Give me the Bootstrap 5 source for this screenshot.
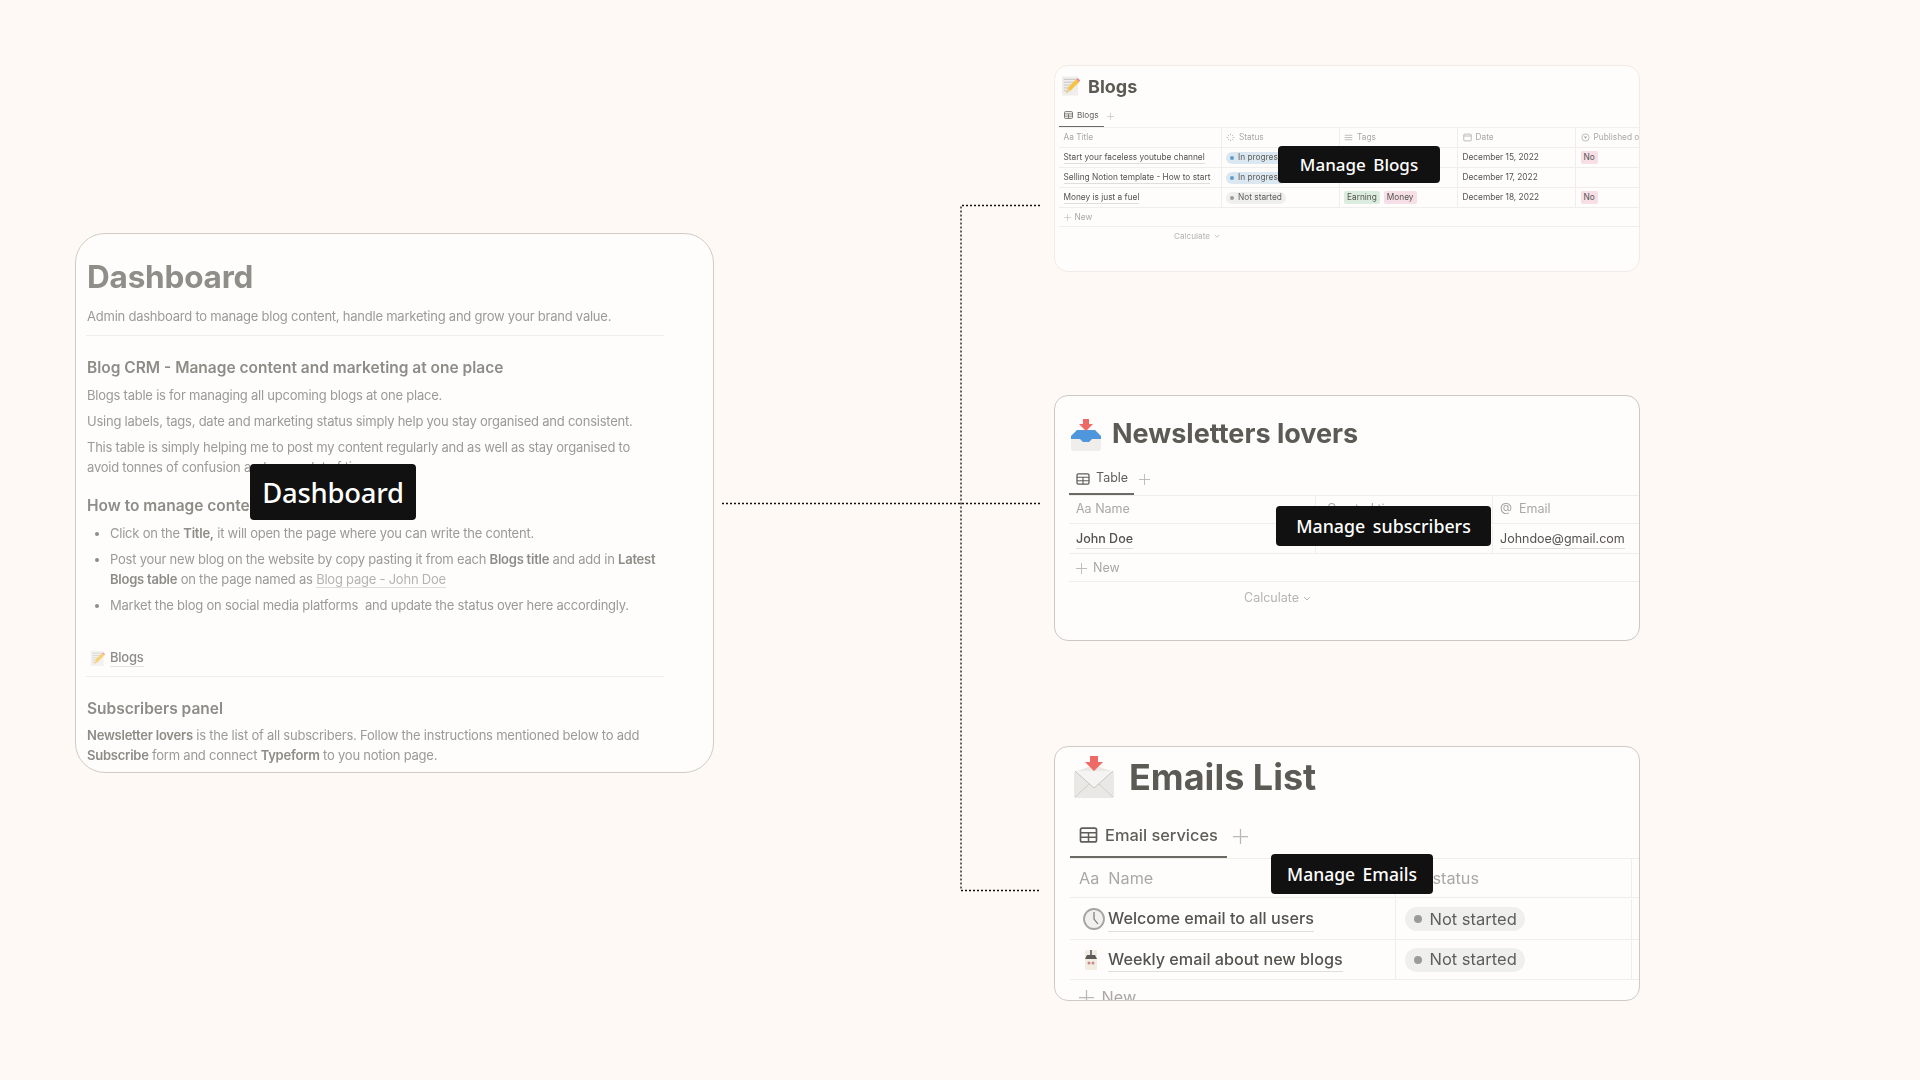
<!doctype html>
<html lang="en">
<head>
<meta charset="utf-8">
<title>Dashboard</title>
<link href="https://cdn.jsdelivr.net/npm/bootstrap@5.3.0/dist/css/bootstrap.min.css" rel="stylesheet">
<style>
body{background:#fff9f5;font-family:Inter,"Liberation Sans",sans-serif;margin:0}
.stage{position:relative;width:1920px;height:1080px;overflow:hidden}
.links{position:absolute;left:0;top:0;pointer-events:none}
.left-col{width:639px;margin-left:75px;padding-top:233px}
.right-col{width:586px;margin-left:340px}
.panel{position:relative;background:#fffdfb;border:1px solid #d6d3cf;overflow:hidden}
.panel>*:not(.tag-label){filter:blur(.35px)}
.tag-label{position:absolute;z-index:3;background:#111;color:#fff;border-radius:4px;font-family:"Noto Sans",sans-serif;font-weight:500;display:flex;align-items:center;justify-content:center}
.dash{height:540px;border-radius:30px;border-color:#cfccc8;padding:23px 0 0 11px;color:#9b9a96;font-size:13px;letter-spacing:-.23px;line-height:20px}
.dash h1{font-size:31.5px;line-height:40px;font-weight:700;color:#8f8e88;margin:0 0 9px;letter-spacing:-.2px}
.dash h2{font-size:15.5px;line-height:24px;font-weight:600;color:#8d8c87;margin:0 0 5px;letter-spacing:0}
.dash p{margin:0 0 6px}
.dash .sub-line{margin:0}
.dash b{font-weight:600;color:#8d8c87}
.dash ul{margin:0;padding-left:23px}
.dash li{margin-bottom:6px}
.dash li::marker{color:#8d8c87}
.dash-rule{width:578px;height:1px;background:#efedea;margin-left:-1px}
.rule-a{margin-top:9px;margin-bottom:20px}
.rule-b{margin-bottom:20px}
.dash .h-how{margin-top:17px;margin-bottom:5px}
.dash .h-subs{margin-bottom:4px}
.dash-link{color:#b5b3b0;border-bottom:1px solid #dfddda}
.dash-blogs{display:flex;align-items:center;gap:5px;margin:33px 0 8px 3px;height:20px;font-weight:500;color:#8d8c87}
.dash-blogs svg{opacity:.75}
.dash-blogs span{border-bottom:1px solid #e5e3e0;line-height:17px}
.lbl-dash{left:174px;top:230px;width:166px;height:56px;font-size:27.4px;padding-top:2px}
.card-blogs{height:207px;margin-top:65px;border-radius:14px;border-color:#efebe7}
.card-news{height:246px;margin-top:123px;border-radius:14px;border-color:#cbc9c6}
.card-mail{height:255px;margin-top:105px;border-radius:14px;border-color:#cdcbc8}
.ttl{display:flex;align-items:center;font-weight:700;color:#5b5a54;white-space:nowrap}
.tabs{display:flex;align-items:center;color:#5f5e59;white-space:nowrap}
.under{display:flex;align-items:center;height:100%;border-bottom-style:solid;border-bottom-color:#6b6a65}
.plus{stroke:#b9b8b4;stroke-width:1;fill:none;flex:none}
.trow{display:grid;border-bottom:1px solid #efeeec;white-space:nowrap;color:#54534e}
.trow>div{display:flex;align-items:center;border-right:1px solid #efeeec;overflow:hidden;min-width:0}
.trow>div:last-child{border-right:0}
.trow.hd{color:#a9a8a4}
.trow.one{grid-template-columns:1fr}
.ul{border-bottom:1px solid #dfdedb}
.pill{display:inline-flex;align-items:center;border-radius:99px;background:#efefee;color:#5f5e59}
.pill i{display:block;border-radius:50%;background:#9c9b98}
.pill.prog{background:#dbe7f1}.pill.prog i{background:#5f9fcb}
.chip{border-radius:2px;display:inline-block}
.c-g{background:#dcecdf}.c-p{background:#f7dfe8}
.calc{color:#b5b4b0;display:flex;align-items:center;gap:4px}
.calc svg{stroke:#b5b4b0;fill:none}
/* Blogs card */
.card-blogs .ttl{height:40px;padding:0 0 0 6px;gap:8px;font-size:18px}
.card-blogs .tabs{height:21px;margin:0 0 0 4px;font-size:8.2px;gap:3px}
.card-blogs .under{width:45px;padding:0 0 2px 5px;gap:4px;border-bottom-width:1.5px}
.card-blogs .tbl{margin-left:4px;border-top:1px solid #f1f0ee;font-size:8.3px}
.card-blogs .trow{grid-template-columns:162.5px 118px 118.5px 118px 90px;height:20px}
.card-blogs .trow.one{grid-template-columns:1fr;height:19px}
.card-blogs .trow>div{padding-left:4.5px;gap:4px}
.card-blogs .pill{height:12px;padding:0 4px 0 4px;gap:4px}
.card-blogs .pill i{width:4px;height:4px}
.card-blogs .chip{padding:0 3px;line-height:13px}
.card-blogs .calc{font-size:8.2px;margin:1px 0 0 119px;line-height:16px}
.lbl-blogs{left:223px;top:80px;width:162px;height:37px;font-size:17px;word-spacing:3px}
/* Newsletters card */
.card-news .ttl{height:61px;padding:16px 0 0 15px;gap:10px;font-size:27px}
.card-news .tabs{height:33px;margin:5px 0 0 14px;padding-top:2px;font-size:12.5px;gap:5px}
.card-news .under{width:65px;padding-left:7px;gap:6px;border-bottom-width:2px}
.card-news .tbl{margin-left:14px;border-top:1px solid #efeeec;font-size:12.5px}
.card-news .trow{grid-template-columns:247px 177px 146px}
.card-news .r-hd{height:28px}
.card-news .r-body{height:30px;padding-top:2px}
.card-news .trow.one{grid-template-columns:1fr;height:28px;padding-top:2px}
.card-news .trow>div{padding-left:7px;gap:6px}
.card-news .calc{font-size:12.5px;margin:7px 0 0 189px;line-height:18px}
.lbl-news{left:221px;top:110px;width:215px;height:40px;font-size:17.8px;word-spacing:3px}
/* Emails card */
.card-mail .ttl{height:60px;padding:0 0 0 18px;gap:14px;font-size:36px}
.card-mail .tabs{height:51px;margin:0 0 0 15px;font-size:16.4px;font-weight:500;gap:6px;padding-top:7px}
.card-mail .under{width:157px;padding-left:9px;gap:7px;border-bottom-width:2.5px}
.card-mail .tbl{margin-left:15px;border-top:1px solid #efeeec;font-size:16.2px}
.card-mail .trow{grid-template-columns:325.5px 236px 20px}
.card-mail .r-hd{height:39px}
.card-mail .r-a{height:42px;padding-top:1px}
.card-mail .r-b{height:40px}
.card-mail .trow.one{grid-template-columns:1fr;height:36px}
.card-mail .trow>div{padding-left:9px;gap:3px}
.card-mail .ul{font-weight:500}
.card-mail .pill{height:24px;padding:0 8px 0 9px;gap:8px;font-size:16.5px}
.card-mail .pill i{width:8px;height:8px}
.ic-clock{margin-left:4px}
.ic-news{margin:0 7px 0 5px}
.status-txt{margin-left:28px}
.lbl-mail{left:216px;top:107px;width:162px;height:40px;font-size:17.5px;word-spacing:3px}
.ico{flex:none;display:block}
</style>
</head>
<body>
<svg width="0" height="0" class="position-absolute">
<defs>
<symbol id="grid" viewBox="0 0 16 14"><rect x="1" y="1" width="14" height="12" rx="1.500" fill="none" stroke="currentColor" stroke-width="1.500"/><path d="M1 5h14M1 9h14M8 5v8" stroke="currentColor" stroke-width="1.300" fill="none"/></symbol>
<symbol id="pl" viewBox="0 0 12 12"><path d="M6 0v12M0 6h12"/></symbol>
<symbol id="chev" viewBox="0 0 8 5"><path d="M1 1l3 3 3-3"/></symbol>
<symbol id="memo" viewBox="0 0 20 20"><rect x="1" y="0" width="17" height="20" fill="#efeeec"/><path d="M3 3h13M3 6h13M3 9h10M3 12h7M3 15h5" stroke="#b9b8b6" stroke-width=".8"/><path d="M5 18l2-6 9-9 3 3-9 9z" fill="#f6c445"/><path d="M16 3l1.500-1.500 2.500 2.500-1 2z" fill="#e9868c"/><path d="M5 18l2-6 3 3z" fill="#e8d2a8"/></symbol>
<symbol id="inbox" viewBox="0 0 32 32"><path d="M1 17l6-6h18l6 6v13a2 2 0 0 1-2 2H3a2 2 0 0 1-2-2z" fill="#efeeea"/><path d="M1 17l6-6h18l6 6v3H22l-3 3h-6l-3-3H1z" fill="#4f97dc"/><path d="M13 0h6v5h4l-7 7-7-7h4z" fill="#ee6a66"/></symbol>
<symbol id="mail" viewBox="0 0 42 42"><path d="M1 16L21 9l20 7v24a2 2 0 0 1-2 2H3a2 2 0 0 1-2-2z" fill="#e9e8e5"/><path d="M2 15l19 17 19-17" fill="#f5f4f2" stroke="#c8c7c3" stroke-width="1"/><path d="M2 41l14-13M40 41L26 28" stroke="#cfcecb" stroke-width="1"/><path d="M17 0h8v6h5L21 15 12 6h5z" fill="#ee6a66"/></symbol>
<symbol id="clock" viewBox="0 0 22 22"><circle cx="11" cy="11" r="10" fill="#f1f0ee" stroke="#a5a4a1" stroke-width="1.800"/><path d="M11 4v7l4 5" stroke="#77767a" stroke-width="1.200" fill="none"/></symbol>
<symbol id="news" viewBox="0 0 14 22"><rect x="1" y="1" width="12" height="20" fill="#f2ece3"/><path d="M3 6h8l2 4H1z" fill="#5a5a58"/><circle cx="5" cy="14" r="1.500" fill="#c98a85"/><circle cx="9" cy="14" r="1.500" fill="#c98a85"/><path d="M7 1v5" stroke="#777" stroke-width="2"/></symbol>
<symbol id="spin" viewBox="0 0 12 12"><path d="M6 1v2M6 9v2M1 6h2M9 6h2M2.500 2.500l1.400 1.400M8.100 8.100l1.400 1.400M2.500 9.500l1.400-1.400M8.100 3.900l1.400-1.400" stroke="currentColor" stroke-width="1" fill="none"/></symbol>
<symbol id="list" viewBox="0 0 12 12"><path d="M1 3h10M1 6h10M1 9h10" stroke="currentColor" stroke-width="1" fill="none"/></symbol>
<symbol id="cal" viewBox="0 0 12 12"><rect x="1" y="1.500" width="10" height="9" rx="1" fill="none" stroke="currentColor"/><path d="M1 4h10" stroke="currentColor"/></symbol>
<symbol id="sel" viewBox="0 0 12 12"><circle cx="6" cy="6" r="4.800" fill="none" stroke="currentColor"/><path d="M3.800 4.800h4.400L6 8z" fill="currentColor"/></symbol>
</defs>
</svg>
<div class="stage d-flex">
  <svg class="links" width="1920" height="1080" fill="none" stroke="#111" stroke-width="1.300" stroke-dasharray="2 2">
    <path d="M1040 205.500H961V890.500H1040"/>
    <path d="M722 503.500H1040"/>
  </svg>

  <div class="left-col flex-none">
    <section class="panel dash">
      <h1>Dashboard</h1>
      <p class="sub-line">Admin dashboard to manage blog content, handle marketing and grow your brand value.</p>
      <div class="dash-rule rule-a"></div>
      <h2>Blog CRM - Manage content and marketing at one place</h2>
      <p>Blogs table is for managing all upcoming blogs at one place.</p>
      <p>Using labels, tags, date and marketing status simply help you stay organised and consistent.</p>
      <p class="mb-0">This table is simply helping me to post my content regularly and as well as stay organised to<br>avoid tonnes of confusion and save a lot of time.</p>
      <h2 class="h-how">How to manage content</h2>
      <ul>
        <li>Click on the <b>Title,</b> it will open the page where you can write the content.</li>
        <li>Post your new blog on the website by copy pasting it from each <b>Blogs title</b> and add in <b>Latest<br>Blogs table</b> on the page named as <span class="dash-link">Blog page - John Doe</span></li>
        <li>Market the blog on social media platforms &nbsp;and update the status over here accordingly.</li>
      </ul>
      <div class="dash-blogs"><svg class="ico" width="15" height="15"><use href="#memo"/></svg><span>Blogs</span></div>
      <div class="dash-rule rule-b"></div>
      <h2 class="h-subs">Subscribers panel</h2>
      <p class="mb-0"><b>Newsletter lovers</b> is the list of all subscribers. Follow the instructions mentioned below to add<br><b>Subscribe</b> form and connect <b>Typeform</b> to you notion page.</p>
      <div class="tag-label lbl-dash">Dashboard</div>
    </section>
  </div>

  <div class="right-col flex-none">
    <section class="panel card-blogs">
      <div class="ttl"><svg class="ico" width="19" height="20"><use href="#memo"/></svg>Blogs</div>
      <div class="tabs"><div class="under"><svg class="ico" width="9" height="8"><use href="#grid"/></svg>Blogs</div><svg class="plus" width="7" height="7"><use href="#pl"/></svg></div>
      <div class="tbl">
        <div class="trow hd"><div>Aa Title</div><div><svg class="ico" width="9" height="9"><use href="#spin"/></svg>Status</div><div><svg class="ico" width="9" height="9"><use href="#list"/></svg>Tags</div><div><svg class="ico" width="9" height="9"><use href="#cal"/></svg>Date</div><div><svg class="ico" width="9" height="9"><use href="#sel"/></svg>Published on</div></div>
        <div class="trow"><div><span class="ul">Start your faceless youtube channel</span></div><div><span class="pill prog"><i></i>In progress</span></div><div></div><div>December 15, 2022</div><div><span class="chip c-p">No</span></div></div>
        <div class="trow"><div><span class="ul">Selling Notion template - How to start</span></div><div><span class="pill prog"><i></i>In progress</span></div><div></div><div>December 17, 2022</div><div></div></div>
        <div class="trow"><div><span class="ul">Money is just a fuel</span></div><div><span class="pill"><i></i>Not started</span></div><div><span class="chip c-g">Earning</span><span class="chip c-p">Money</span></div><div>December 18, 2022</div><div><span class="chip c-p">No</span></div></div>
        <div class="trow hd one"><div><svg class="plus" width="7" height="7"><use href="#pl"/></svg>New</div></div>
      </div>
      <div class="calc">Calculate <svg width="6" height="4"><use href="#chev"/></svg></div>
      <div class="tag-label lbl-blogs">Manage Blogs</div>
    </section>

    <section class="panel card-news">
      <div class="ttl"><svg class="ico" width="32" height="32"><use href="#inbox"/></svg>Newsletters lovers</div>
      <div class="tabs"><div class="under"><svg class="ico" width="14" height="12"><use href="#grid"/></svg>Table</div><svg class="plus" width="11" height="11"><use href="#pl"/></svg></div>
      <div class="tbl">
        <div class="trow hd r-hd"><div>Aa Name</div><div><span class="ms-1">Created time</span></div><div>@ &nbsp;Email</div></div>
        <div class="trow r-body"><div><span class="ul fw-medium">John Doe</span></div><div></div><div><span class="ul">Johndoe@gmail.com</span></div></div>
        <div class="trow hd one"><div><svg class="plus" width="11" height="11"><use href="#pl"/></svg>New</div></div>
      </div>
      <div class="calc">Calculate <svg width="8" height="5"><use href="#chev"/></svg></div>
      <div class="tag-label lbl-news">Manage subscribers</div>
    </section>

    <section class="panel card-mail">
      <div class="ttl"><svg class="ico" width="42" height="42"><use href="#mail"/></svg>Emails List</div>
      <div class="tabs"><div class="under"><svg class="ico" width="19" height="16"><use href="#grid"/></svg>Email services</div><svg class="plus" width="15" height="15"><use href="#pl"/></svg></div>
      <div class="tbl">
        <div class="trow hd r-hd"><div>Aa &nbsp;Name</div><div><span class="status-txt">status</span></div><div></div></div>
        <div class="trow r-a"><div><svg class="ico ic-clock" width="22" height="22"><use href="#clock"/></svg><span class="ul">Welcome email to all users</span></div><div><span class="pill"><i></i>Not started</span></div><div></div></div>
        <div class="trow r-b"><div><svg class="ico ic-news" width="14" height="22"><use href="#news"/></svg><span class="ul">Weekly email about new blogs</span></div><div><span class="pill"><i></i>Not started</span></div><div></div></div>
        <div class="trow hd one"><div><svg class="plus" width="15" height="15"><use href="#pl"/></svg>&nbsp;New</div></div>
      </div>
      <div class="tag-label lbl-mail">Manage Emails</div>
    </section>
  </div>
</div>
</body>
</html>
